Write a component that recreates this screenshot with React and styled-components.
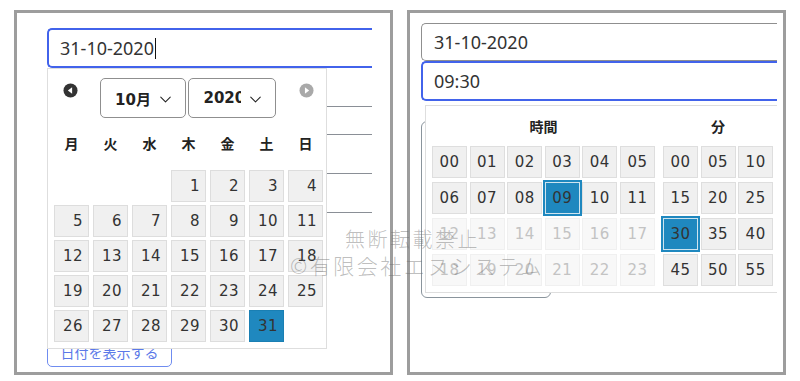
import React from "react";
import styled, { createGlobalStyle, css } from "styled-components";
import { ChevronDown } from "lucide-react";

const GlobalStyle = createGlobalStyle`
  html, body {
    margin: 0;
    padding: 0;
    background: #ffffff;
  }
  * {
    box-sizing: border-box;
  }
`;

const BLUE = "#4263eb";
const PICK = "#1f88bf";
const NUM_FONT = `"DejaVu Sans", Verdana, sans-serif`;
const JP_FONT = `"Noto Sans", "Noto Sans CJK JP", sans-serif`;

const WEEKDAYS = ["月", "火", "水", "木", "金", "土", "日"];
const HOURS = Array.from({ length: 24 }, (_, i) => String(i).padStart(2, "0"));
const MINUTES = Array.from({ length: 12 }, (_, i) => String(i * 5).padStart(2, "0"));

export default function App() {
  // October 2020 starts on a Thursday (monday-first grid)
  const days = [null, null, null, ...Array.from({ length: 31 }, (_, i) => i + 1)];

  return (
    <>
      <GlobalStyle />
      <Page>
        <Panel>
          <Form $width={325}>
            <Field $focused>
              31-10-2020
              <Caret />
            </Field>
            <BehindLine $h={39} />
            <BehindLine $h={28} />
            <BehindLine $h={39} />
            <BehindLine $h={39} />
            <BehindEdge />
            <ShowButton>日付を表示する</ShowButton>

            <DatePopup>
              <CalHeader>
                <NavArrow $dir="prev" />
                <SelectBox $width={86}>
                  <SelectText>10月</SelectText>
                  <ChevronDown size={19} strokeWidth={1.3} />
                </SelectBox>
                <SelectBox $width={88}>
                  <SelectText $clip>2020</SelectText>
                  <ChevronDown size={19} strokeWidth={1.3} />
                </SelectBox>
                <NavArrow $dir="next" />
              </CalHeader>
              <WeekRow>
                {WEEKDAYS.map((w) => (
                  <WeekDay key={w}>{w}</WeekDay>
                ))}
              </WeekRow>
              <DayGrid>
                {days.map((d, i) =>
                  d ? (
                    <DayCell key={i} $selected={d === 31}>
                      {d}
                    </DayCell>
                  ) : (
                    <span key={i} />
                  )
                )}
              </DayGrid>
            </DatePopup>
          </Form>
        </Panel>

        <Panel $right>
          <Form $width={356}>
            <Field $h={38}>31-10-2020</Field>
            <Field $focused $h={40}>
              09:30
            </Field>
            <BehindBox />

            <TimePopup>
              <TimeColumn>
                <TimeTitle>時間</TimeTitle>
                <TimeGrid $cols={6}>
                  {HOURS.map((h, i) => (
                    <TimeCell key={h} $selected={h === "09"} $disabled={i >= 12}>
                      {h}
                    </TimeCell>
                  ))}
                </TimeGrid>
              </TimeColumn>
              <TimeColumn>
                <TimeTitle>分</TimeTitle>
                <TimeGrid $cols={3}>
                  {MINUTES.map((m) => (
                    <TimeCell key={m} $selected={m === "30"}>
                      {m}
                    </TimeCell>
                  ))}
                </TimeGrid>
              </TimeColumn>
            </TimePopup>
          </Form>
        </Panel>

        <Watermark>
          <MarkLine $left={345} $top={224} $size={20}>
            無断転載禁止
          </MarkLine>
          <MarkLine $left={290} $top={250} $size={21}>
            ©有限会社エヌシステム
          </MarkLine>
        </Watermark>
      </Page>
    </>
  );
}

function NavArrow({ $dir }) {
  const next = $dir === "next";
  return (
    <ArrowWrap $next={next}>
      <svg width="15" height="15" viewBox="0 0 16 16">
        <circle cx="8" cy="8" r="7.5" fill={next ? "#a9a9a9" : "#333"} />
        {next ? (
          <path d="M6.3 4.6 L10.8 8 L6.3 11.4 Z" fill="#fff" />
        ) : (
          <path d="M9.7 4.6 L5.2 8 L9.7 11.4 Z" fill="#fff" />
        )}
      </svg>
    </ArrowWrap>
  );
}

const Page = styled.div`
  position: relative;
  display: flex;
  gap: 14px;
  padding: 10px 0 0 14px;
  width: 800px;
  height: 381px;
  overflow: hidden;
`;

const Panel = styled.section`
  width: 379px;
  height: 365px;
  border: 3px solid #9d9d9d;
  padding: ${(p) => (p.$right ? "10px 0 0 11px" : "15px 0 0 30px")};
`;

const Form = styled.div`
  position: relative;
  width: ${(p) => p.$width}px;
  display: flex;
  flex-direction: column;
`;

const Field = styled.div`
  height: ${(p) => p.$h || 40}px;
  display: flex;
  align-items: center;
  padding-left: ${(p) => (p.$focused ? 11 : 12)}px;
  border: ${(p) => (p.$focused ? `2px solid ${BLUE}` : "1px solid #8f8f8f")};
  border-right: none;
  border-radius: 5px 0 0 5px;
  font-family: ${JP_FONT};
  font-size: 18px;
  color: #333;
  background: #fff;
`;

const Caret = styled.span`
  display: inline-block;
  width: 1px;
  height: 21px;
  margin-left: 1px;
  background: #111;
`;

const BehindLine = styled.div`
  height: ${(p) => p.$h}px;
  border-bottom: 1px solid #8a8f96;
`;

const BehindEdge = styled.div`
  margin-top: 5px;
  width: 120px;
  height: 15px;
  border-left: 2px solid #9aa1a8;
`;

const ShowButton = styled.button`
  margin-top: 102px;
  width: 125px;
  height: 32px;
  display: flex;
  align-items: flex-end;
  justify-content: center;
  padding: 0 0 6px;
  border: 1px solid #6f8cf0;
  border-radius: 5px;
  background: #fff;
  color: #5b79e8;
  font-family: ${JP_FONT};
  font-size: 14px;
  line-height: 1;
`;

const DatePopup = styled.div`
  position: absolute;
  top: 40px;
  left: 0;
  width: 280px;
  height: 281px;
  background: #fff;
  border: 1px solid #dedede;
  padding: 9px 5px 6px 6px;
  z-index: 2;
`;

const CalHeader = styled.div`
  height: 40px;
  display: flex;
  align-items: center;
  padding-left: 9px;
`;

const ArrowWrap = styled.span`
  display: flex;
  width: 15px;
  height: 15px;
  margin-top: -15px;
  margin-left: ${(p) => (p.$next ? "21px" : "0")};
  margin-right: ${(p) => (p.$next ? "0" : "22px")};
`;

const SelectBox = styled.div`
  width: ${(p) => p.$width}px;
  height: 40px;
  margin-right: 2px;
  display: flex;
  align-items: center;
  justify-content: center;
  gap: 5px;
  padding-left: 4px;
  border: 1px solid #8f8f8f;
  border-radius: 5px;
  color: #222;

  svg {
    flex: none;
    margin-top: 3px;
  }
`;

const SelectText = styled.span`
  font-family: ${NUM_FONT}, "Noto Sans CJK JP";
  font-weight: bold;
  font-size: 15px;
  white-space: nowrap;
  ${(p) =>
    p.$clip &&
    css`
      width: 37px;
      overflow: hidden;
    `}
`;

const WeekRow = styled.div`
  height: 52px;
  display: grid;
  grid-template-columns: repeat(7, 35px);
  column-gap: 4px;
  align-items: center;
  padding-bottom: 2px;
`;

const WeekDay = styled.span`
  text-align: center;
  font-family: "Noto Sans CJK JP", sans-serif;
  font-weight: bold;
  font-size: 14px;
  color: #222;
`;

const DayGrid = styled.div`
  display: grid;
  grid-template-columns: repeat(7, 35px);
  grid-auto-rows: 32px;
  column-gap: 4px;
  row-gap: 3px;
`;

const DayCell = styled.span`
  display: flex;
  align-items: center;
  justify-content: flex-end;
  padding-right: 5px;
  border: 1px solid ${(p) => (p.$selected ? "#1a7fb3" : "#dddddd")};
  background: ${(p) => (p.$selected ? PICK : "#f0f0f0")};
  font-family: ${NUM_FONT};
  font-size: 15px;
  letter-spacing: 0.5px;
  color: #333;
`;

const BehindBox = styled.div`
  margin-top: 20px;
  width: 130px;
  height: 177px;
  border: 1px solid #8a949c;
  border-radius: 6px;
`;

const TimePopup = styled.div`
  position: absolute;
  top: 82px;
  left: 4px;
  width: 352px;
  height: 188px;
  display: flex;
  gap: 8px;
  padding: 0 0 6px 6px;
  background: #fff;
  border: 1px solid #dedede;
  border-right: none;
  z-index: 2;
`;

const TimeColumn = styled.div`
  display: flex;
  flex-direction: column;
`;

const TimeTitle = styled.div`
  height: 40px;
  display: flex;
  align-items: center;
  justify-content: center;
  font-family: "Noto Sans CJK JP", sans-serif;
  font-weight: bold;
  font-size: 14px;
  color: #222;
`;

const TimeGrid = styled.div`
  display: grid;
  grid-template-columns: repeat(${(p) => p.$cols}, 35px);
  grid-auto-rows: 32px;
  column-gap: 2.6px;
  row-gap: 4px;
`;

const TimeCell = styled.span`
  display: flex;
  align-items: center;
  justify-content: center;
  font-family: ${NUM_FONT};
  font-size: 15px;
  letter-spacing: 0.5px;
  border: 1px solid #dedede;
  background: #f0f0f0;
  color: #333;

  ${(p) =>
    p.$disabled &&
    css`
      background: #f8f8f8;
      border-color: #f0f0f0;
      color: #c3c3c3;
    `}

  ${(p) =>
    p.$selected &&
    css`
      background: ${PICK};
      border-color: #cfe4ef;
      box-shadow: 0 0 0 2px ${PICK};
    `}
`;

const Watermark = styled.div`
  position: absolute;
  inset: 0;
  pointer-events: none;
  z-index: 5;
`;

const MarkLine = styled.span`
  position: absolute;
  left: ${(p) => p.$left}px;
  top: ${(p) => p.$top}px;
  font-family: "Noto Sans CJK JP", sans-serif;
  font-weight: 300;
  font-size: ${(p) => p.$size}px;
  letter-spacing: 2.5px;
  white-space: nowrap;
  color: rgba(110, 110, 110, 0.45);
`;
